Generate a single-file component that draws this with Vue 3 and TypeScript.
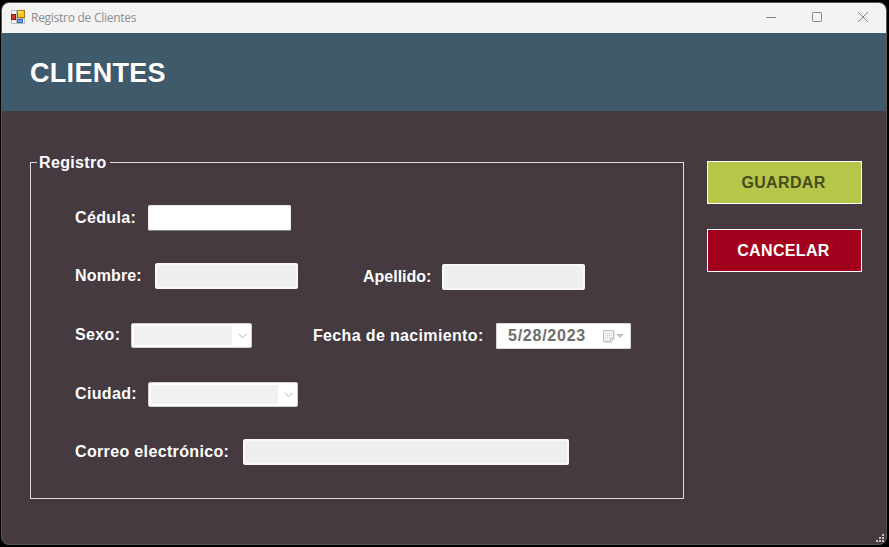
<script setup lang="ts">
import { ref } from 'vue'

const cedula = ref<string>('')
const fecha = ref<string>('5/28/2023')
</script>

<template>
  <div class="desktop">
    <main class="window">
      <header class="titlebar">
        <svg class="app-icon" width="14" height="14" viewBox="0 0 14 14" shape-rendering="crispEdges">
          <path d="M0 0h14v14H0z" fill="#bdbdbd" />
          <path d="M1 1h4v3H1zM1 10h4v3H1zM12 9h1v4h-1z" fill="#f6f6f6" />
          <path d="M0 4h5v6H0z" fill="#8d1717" />
          <path d="M1 5h3v4H1z" fill="#d33a2b" />
          <path d="M6 0h8v8H6z" fill="#a87504" />
          <path d="M7 1h6v6H7z" fill="#fbc62c" />
          <path d="M7 1h4v2H7z" fill="#ffe477" />
          <path d="M6 9h6v4H6z" fill="#3767c5" />
          <path d="M7 10h4v2H7z" fill="#6ea5f4" />
        </svg>
        <span class="caption">Registro de Clientes</span>
        <div class="controls">
          <svg width="10" height="10" viewBox="0 0 10 10"><path d="M0 5.5h10" /></svg>
          <svg width="10" height="10" viewBox="0 0 10 10"><rect x=".5" y=".5" width="9" height="9" rx=".8" /></svg>
          <svg width="10" height="10" viewBox="0 0 10 10"><path d="M0 0l10 10M10 0L0 10" /></svg>
        </div>
      </header>

      <div class="banner"><h1>CLIENTES</h1></div>

      <form class="body" @submit.prevent>
        <fieldset class="group">
          <legend>Registro</legend>
          <div class="rows">
            <div class="row">
              <label class="l-cedula">Cédula:</label>
              <input v-model="cedula" class="box active" type="text" />
            </div>
            <div class="row">
              <label class="l-nombre">Nombre:</label>
              <input class="box" type="text" disabled />
              <label class="l-apellido">Apellido:</label>
              <input class="box lower" type="text" disabled />
            </div>
            <div class="row">
              <label class="l-sexo">Sexo:</label>
              <div class="combo sexo">
                <span class="value"></span>
                <svg width="9" height="6" viewBox="0 0 9 6"><path d="M.5 .7l4 4 4-4" /></svg>
              </div>
              <label class="l-fecha">Fecha de nacimiento:</label>
              <div class="date">
                <span>{{ fecha }}</span>
                <svg class="calendar" width="21" height="13" viewBox="0 0 21 13">
                  <path d="M1.5 12.5h7l3-3v-8" fill="none" stroke="#dedcda" />
                  <path d="M.5 .5h10v8l-3 3h-7z" fill="#f5f5f8" stroke="#c5c0bd" />
                  <path d="M2 3.5h7M2 5.5h7M2 7.5h7M2 9.5h5" stroke="#d5d5e4" stroke-dasharray="1 1" />
                  <path d="M10.5 8.5h-3v3" fill="none" stroke="#c5c0bd" />
                  <path d="M13 4h8l-4 4z" fill="#c3c3b9" />
                </svg>
              </div>
            </div>
            <div class="row">
              <label class="l-ciudad">Ciudad:</label>
              <div class="combo ciudad">
                <span class="value"></span>
                <svg width="9" height="6" viewBox="0 0 9 6"><path d="M.5 .7l4 4 4-4" /></svg>
              </div>
            </div>
            <div class="row">
              <label class="l-correo">Correo electrónico:</label>
              <input class="box wide" type="text" disabled />
            </div>
          </div>
        </fieldset>

        <div class="actions">
          <button class="save" type="submit" disabled>GUARDAR</button>
          <button class="cancel" type="button">CANCELAR</button>
        </div>
      </form>

      <svg class="grip" width="8" height="8" viewBox="0 0 8 8" shape-rendering="crispEdges">
        <path d="M6 0h2v2H6zM3 3h2v2H3zM6 3h2v2H6zM0 6h2v2H0zM3 6h2v2H3zM6 6h2v2H6z" fill="#c4c1c2" />
      </svg>
    </main>
  </div>
</template>

<style>
body {
  background: #000;
}
</style>

<style scoped>
* {
  box-sizing: border-box;
}
.desktop {
  width: 889px;
  height: 547px;
  padding: 2px 2px 2px 1px;
  background: #000;
  font-family: "Liberation Sans", Arial, sans-serif;
}
.window {
  position: relative;
  height: 543px;
  border: 1px solid #5b5759;
  border-radius: 8px;
  background: #443a3f;
  overflow: hidden;
}
.titlebar {
  display: flex;
  align-items: center;
  height: 30px;
  padding: 0 18px 0 9px;
  background: #f3f3f3;
}
.app-icon {
  margin-top: -2px;
}
.caption {
  margin-left: 6px;
  font: 12px/16px "Open Sans", "Noto Sans", sans-serif;
  letter-spacing: -0.27px;
  color: #8c8c8c;
}
.controls {
  display: flex;
  gap: 36px;
  margin: -2px 0 0 auto;
}
.controls svg {
  fill: none;
  stroke: #858585;
  stroke-width: 1;
}
.banner {
  height: 78px;
  padding: 25px 28px 0;
  background: #3e5a6b;
}
h1 {
  margin: 0;
  font-size: 27px;
  line-height: 31px;
  letter-spacing: 0.3px;
  color: #fff;
}
.body {
  display: flex;
  align-items: flex-start;
  gap: 23px;
  padding: 42px 24px 0 28px;
}
.group {
  width: 654px;
  height: 346px;
  margin: 0;
  padding: 0;
  border: 1px solid #dddbdc;
}
legend {
  height: 18px;
  margin-left: 6px;
  padding: 0 2px;
  width: 73px;
  line-height: 19px;
}
legend,
.row,
button {
  font-size: 16px;
  font-weight: bold;
  letter-spacing: 0.35px;
  color: #fff;
}
.rows {
  display: grid;
  grid-template-rows: 58px 60px 59px 57px 26px;
  padding: 34px 0 0 44px;
}
.row {
  display: flex;
  align-items: flex-start;
}
label {
  flex: none;
  line-height: 26px;
  white-space: nowrap;
}
.l-cedula,
.l-ciudad {
  width: 73px;
}
.l-nombre {
  width: 80px;
  letter-spacing: 0.15px;
}
.l-apellido {
  width: 79px;
  margin-left: 65px;
  padding-top: 1px;
  letter-spacing: 0;
}
.l-sexo {
  width: 56px;
}
.l-sexo,
.l-ciudad {
  line-height: 24px;
}
.l-fecha {
  width: 183px;
  margin-left: 61px;
}
.l-correo {
  width: 168px;
}
.box {
  width: 143px;
  height: 26px;
  margin: 0;
  padding: 2px 4px;
  border: 2px solid #f8f8f8;
  border-radius: 2px;
  outline: none;
  background: #efefef;
  font: inherit;
}
.active {
  border: 1px solid #ececec;
  border-bottom-color: #868686;
  background: #fff;
}
.lower {
  margin-top: 1px;
}
.wide {
  width: 326px;
}
.combo {
  display: flex;
  align-items: center;
  height: 25px;
  padding: 2px 4px 2px 2px;
  border: 1px solid #cfcdce;
  border-radius: 2px;
  background: #fff;
}
.combo .value {
  flex: 1;
  height: 19px;
  margin-right: 6px;
  background: #f0f0f0;
}
.combo svg {
  fill: none;
  stroke: #b5b5b5;
}
.sexo {
  width: 121px;
}
.ciudad {
  width: 150px;
}
.date {
  display: flex;
  align-items: center;
  justify-content: space-between;
  width: 135px;
  height: 26px;
  padding: 0 6px 0 11px;
  border: 1px solid #d9d7d8;
  border-radius: 1px;
  background: #fff;
  letter-spacing: 0.75px;
  color: #6d6d6d;
}
.actions {
  display: grid;
  gap: 25px;
  width: 155px;
  padding-top: 8px;
}
button {
  height: 43px;
  padding: 0 2px 0 0;
  border: 1px solid #fff;
  border-radius: 0;
  font-family: inherit;
}
.save {
  background: #b5c64a;
  color: #454c1b;
}
.cancel {
  background: #a2001d;
}
.grip {
  position: absolute;
  right: 2px;
  bottom: 2px;
}
</style>
